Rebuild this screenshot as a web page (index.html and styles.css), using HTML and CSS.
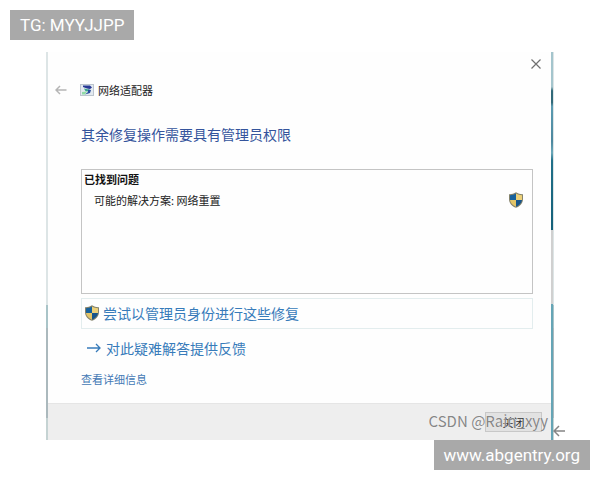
FILE: index.html
```
<!DOCTYPE html>
<html lang="zh-CN">
<head>
<meta charset="utf-8">
<title>网络适配器</title>
<link rel="stylesheet" href="styles.css">
</head>
<body>
<svg class="defs" aria-hidden="true">
  <symbol id="shield" viewBox="0 0 14 16">
    <path fill="#85836c" d="M7 .3C5 1.700 2.500 2.300 0 2.200V7c0 4.300 3 7.300 7 8.800 4-1.500 7-4.500 7-8.800V2.200C11.500 2.300 9 1.700 7 .3z"/>
    <path fill="#17619b" d="M7 1.500C5.200 2.600 3.200 3.100 1 3.200V8h6z"/>
    <path fill="#ecd078" d="M7 1.500c1.800 1.100 3.800 1.600 6 1.700V8H7z"/>
    <path fill="#e2c468" d="M1 8c.4 3.200 2.700 5.400 6 6.800V8z"/>
    <path fill="#17558b" d="M13 8c-.4 3.200-2.700 5.400-6 6.800V8z"/>
  </symbol>
</svg>
<div class="tag">TG: MYYJJPP</div>
<div class="stage">
  <main class="dialog">
    <div class="bar">
      <button class="close" aria-label="关闭窗口"><svg viewBox="0 0 10 10"><path d="M.5 .5l9 9M9.500 .5l-9 9"/></svg></button>
    </div>
    <header class="title">
      <button class="back" aria-label="返回"><svg viewBox="0 0 12 10"><path d="M11.500 5H1M5 1L1 5l4 4"/></svg></button>
      <svg class="app" viewBox="0 0 14 12" aria-hidden="true">
        <rect x=".5" y=".5" width="13" height="11" fill="#e3eaf0" stroke="#bcc5ce"/>
        <path fill="#273894" d="M3 1.500h7l2 2-2 1.500-3-.5-4-1.500z"/>
        <path fill="#3aa58c" d="M4 4.500l6 1.200-1.500 1.800-3-.2z"/>
        <path fill="#274c9e" d="M8 5.500l3 .5-1 3-5 1.500 3-2.500z"/>
        <path fill="#8fdba5" d="M2 8l5-.5-2 3H2z"/>
      </svg>
      <span>网络适配器</span>
    </header>
    <div class="content">
      <h1>其余修复操作需要具有管理员权限</h1>
      <section class="issues">
        <h2>已找到问题</h2>
        <div class="issue"><span>可能的解决方案: 网络重置</span><svg class="shield" aria-hidden="true"><use href="#shield"/></svg></div>
      </section>
      <button class="command"><svg class="shield" aria-hidden="true"><use href="#shield"/></svg>尝试以管理员身份进行这些修复</button>
      <a class="feedback" href="#feedback"><svg viewBox="0 0 14 10" aria-hidden="true"><path d="M0 5h13M9 1l4 4-4 4"/></svg>对此疑难解答提供反馈</a>
      <a class="details" href="#details">查看详细信息</a>
    </div>
    <footer class="foot"><button class="done">关闭</button></footer>
  </main>
  <div class="mark">CSDN @Rain_xyy</div>
  <svg class="return" viewBox="0 0 12 12" aria-hidden="true"><path d="M12 6H1M6 1L1 6l5 5"/></svg>
</div>
<div class="tag site">www.abgentry.org</div>
</body>
</html>
```
FILE: styles.css
```
* { box-sizing: border-box; }
body {
  margin: 0;
  padding: 10px;
  display: flex;
  flex-direction: column;
  background: #fff;
  color: #222;
  font: 11px/16px "Noto Sans CJK SC", sans-serif;
}
button { margin: 0; padding: 0; border: 0; background: none; font: inherit; color: inherit; }
a { text-decoration: none; }
h1, h2 { margin: 0; }
svg { display: block; fill: none; flex: none; }
.defs { position: absolute; width: 0; height: 0; }

.tag {
  align-self: flex-start;
  padding: 0 10px;
  background: #a9a9a9;
  color: #fff;
  font: 17px/30px Roboto, sans-serif;
}
.site { align-self: flex-end; }

.stage { position: relative; margin: 12px 36px 0; }
.dialog {
  border-left: 2px solid;
  border-right: 2px solid;
  border-image: linear-gradient(#dde5e6 0 65%, #a9c4c8 65% 71%, #abb9bd 71% 94%, #c5d3d3 94%) 1;
  position: relative;
  background: #fefefe;
}
.dialog::after {
  content: "";
  position: absolute;
  inset: 0 -1px 0 auto;
  width: 2px;
  background: linear-gradient(#a4c5cd 0 9%, #316979 10% 13%, #5b9bb1 14%, #4c879e 23%, #6ba8b9 26%, #217089 28%, #146079 46%, #d0d0d0 46% 65%, #65a5b6 65%);
}
.bar { display: flex; justify-content: flex-end; padding: 6px 11px 0; }
.close { width: 10px; height: 12px; }
.close svg { width: 10px; height: 10px; stroke: #707070; stroke-width: 1.2; }
.title { display: flex; align-items: center; margin-top: 12px; padding-left: 7px; }
.back svg { width: 12px; height: 10px; stroke: #b5b5b5; stroke-width: 1.5; }
.app { width: 14px; height: 12px; margin: 0 4px 0 13px; }

.content { display: flex; flex-direction: column; padding: 25px 19px 0 33px; }
h1 { color: #34549c; font-size: 14px; line-height: 22px; font-weight: 400; }
.issues { height: 125px; margin-top: 24px; padding: 1px 9px 0 2px; border: 1px solid #c4c4c4; }
h2 { font-size: 11px; line-height: 16px; font-weight: 700; color: #111; }
.issue { display: flex; align-items: center; justify-content: space-between; margin-top: 5px; padding-left: 10px; }
.shield { width: 14px; height: 16px; }
.command {
  display: flex;
  align-items: center;
  gap: 4px;
  height: 31px;
  margin-top: 4px;
  padding: 0 3px 1px;
  border: 1px solid #e3edee;
  color: #377bba;
  font-size: 14px;
}
.feedback { display: flex; align-items: center; gap: 5px; margin: 8px 0 0 6px; color: #377bba; font-size: 14px; line-height: 22px; }
.feedback svg { width: 14px; height: 10px; stroke: #377bba; stroke-width: 1.3; }
.details { margin-top: 12px; color: #4379b5; line-height: 16px; }
.foot { display: flex; justify-content: flex-end; margin-top: 16px; padding: 8px 10px; border-top: 1px solid #e5e5e5; background: #eee; }
.done { width: 57px; height: 20px; border: 1px solid #c8c8c8; background: #e2e2e2; color: #333; }

.mark { position: absolute; right: 6px; bottom: 8px; color: #868686; font: 15px/22px "Noto Sans CJK SC", sans-serif; text-shadow: 0 0 1px #fff; }
.return { position: absolute; right: -11px; bottom: 3px; width: 12px; height: 12px; stroke: #858585; stroke-width: 1.5; }
```
